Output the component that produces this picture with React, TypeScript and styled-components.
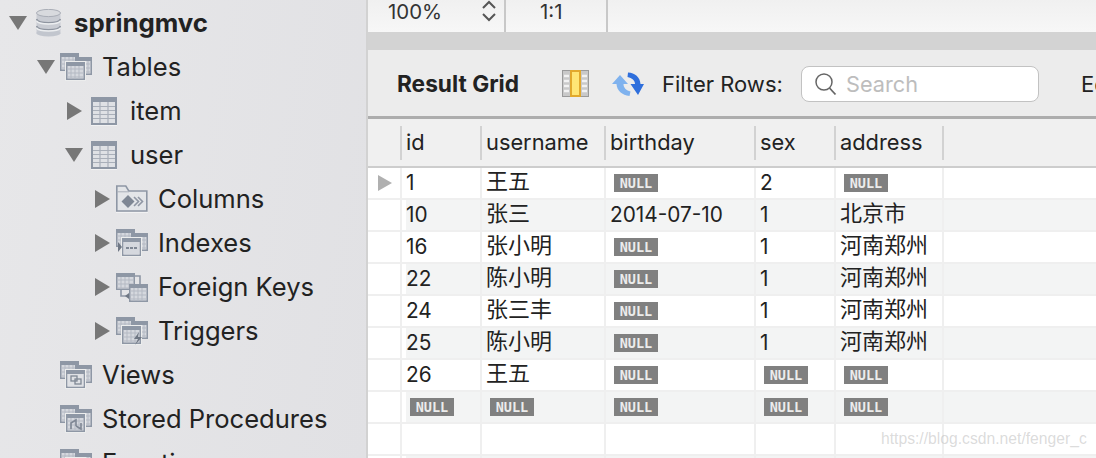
import React from "react";
import styled, { createGlobalStyle } from "styled-components";

const GlobalStyle = createGlobalStyle`
  html, body {
    margin: 0;
    height: 100%;
    overflow: hidden;
    background: #fff;
    font-family: Inter, "Noto Sans CJK SC", "Liberation Sans", sans-serif;
    color: #222;
  }
  #root {
    height: 100%;
  }
`;

const Window = styled.div`
  position: relative;
  display: flex;
  width: 1096px;
  height: 458px;
  overflow: hidden;
`;

const Sidebar = styled.div`
  width: 366px;
  flex: none;
  padding-top: 1px;
  box-sizing: border-box;
  background: linear-gradient(100deg, #e7e7e9, #e1e1e4);
`;

const TreeRow = styled.div<{ $level: number }>`
  display: flex;
  align-items: center;
  height: 44px;
  padding-left: ${(p) => 9 + p.$level * 28}px;
`;

const ArrowSlot = styled.div`
  width: 23px;
  flex: none;
  display: flex;
  align-items: center;
`;

const IconSlot = styled.div`
  width: 32px;
  height: 28px;
  flex: none;
  display: flex;
  justify-content: center;
  margin-right: 10px;
`;

const TreeLabel = styled.span<{ $bold?: boolean }>`
  font-size: ${(p) => (p.$bold ? 25.8 : 25.55)}px;
  font-weight: ${(p) => (p.$bold ? 700 : 400)};
  line-height: 30px;
  white-space: nowrap;
  color: #222;
`;

const Main = styled.div`
  flex: 1;
  min-width: 0;
  display: flex;
  flex-direction: column;
  border-left: 2px solid #d2d2d2;
`;

const TopBar = styled.div`
  height: 32px;
  flex: none;
  display: flex;
  background: linear-gradient(#f0f0f0, #f7f7f7);
`;

const TopCell = styled.div<{ $width: number }>`
  width: ${(p) => p.$width}px;
  box-sizing: border-box;
  border-right: 2px solid #c8c8c8;
  padding-bottom: 10px;
  display: flex;
  align-items: center;
  font-size: 20.4px;
  color: #333;
`;

const ZoomValue = styled.span`
  margin-left: 20px;
  width: 94px;
`;

const RatioValue = styled.span`
  margin-left: 34px;
`;

const Band = styled.div`
  height: 18px;
  flex: none;
  background: #d3d3d3;
`;

const ResultBar = styled.div`
  height: 69px;
  flex: none;
  box-sizing: border-box;
  padding-top: 2px;
  display: flex;
  align-items: center;
  background: #ececec;
  border-bottom: 3px solid #adadad;
  overflow: hidden;
  white-space: nowrap;
`;

const ResultTitle = styled.span`
  margin-left: 29px;
  width: 165px;
  flex: none;
  padding-bottom: 2px;
  font-size: 22.7px;
  font-weight: 700;
`;

const BarButton = styled.div<{ $width: number }>`
  width: ${(p) => p.$width}px;
  flex: none;
  display: flex;
  align-items: center;
`;

const BarLabel = styled.span<{ $width: number }>`
  width: ${(p) => p.$width}px;
  flex: none;
  font-size: 22px;
`;

const SearchBox = styled.div`
  width: 238px;
  height: 36px;
  flex: none;
  box-sizing: border-box;
  display: flex;
  align-items: center;
  gap: 8px;
  padding-left: 12px;
  margin-right: 42px;
  background: #fff;
  border: 1px solid #c2c2c2;
  border-radius: 8px;
  font-size: 21.7px;
  color: #bdbdbd;
`;

const HeaderRow = styled.div`
  height: 47px;
  flex: none;
  display: grid;
  grid-template-columns: 34px 80px 124px 150px 80px 108px 1fr;
  align-items: center;
  background: #f0f0f0;
  border-bottom: 2px solid #cdcdcd;
`;

const HeaderCell = styled.div`
  height: 34px;
  box-sizing: border-box;
  padding: 0 0 2px 4px;
  border-right: 2px solid #d2d2d2;
  display: flex;
  align-items: center;
  font-size: 21.8px;
  color: #222;
`;

const HeaderFill = styled.div`
  height: 34px;
`;

const Rows = styled.div`
  flex: 1;
  display: flex;
  flex-direction: column;
  gap: 2px;
  background: #efefef;
`;

const GridRow = styled.div`
  height: 30px;
  flex: none;
  display: grid;
  grid-template-columns: 32px 78px 122px 148px 78px 106px 1fr;
  grid-template-rows: 30px;
  column-gap: 2px;
`;

const Gutter = styled.div`
  background: #fff;
  display: flex;
  align-items: center;
  padding-left: 10px;
`;

const Cell = styled.div<{ $striped: boolean; $first?: boolean }>`
  background: ${(p) => (p.$striped ? "#f3f4f4" : "#fff")};
  box-shadow: ${(p) => (p.$striped && p.$first ? "inset 4px 0 0 #fff" : "none")};
  padding-left: 4px;
  display: flex;
  align-items: center;
  white-space: nowrap;
  color: #222;
`;

const CellText = styled.span<{ $cjk: boolean }>`
  font-size: ${(p) => (p.$cjk ? 22 : 20.8)}px;
  line-height: 24px;
  padding-bottom: ${(p) => (p.$cjk ? 4 : 1)}px;
`;

const NullBadge = styled.span`
  margin-left: 4px;
  width: 44px;
  height: 18px;
  display: flex;
  align-items: center;
  justify-content: center;
  background: #808080;
  color: #ececec;
  font-family: "DejaVu Sans Mono", monospace;
  font-size: 13.5px;
  font-weight: 700;
`;

const Watermark = styled.span`
  position: absolute;
  left: 881px;
  top: 430px;
  font-family: "Liberation Sans", sans-serif;
  font-size: 15.7px;
  color: rgba(175, 175, 175, 0.45);
  white-space: nowrap;
`;

function DownArrow() {
    return (
        <svg width="18" height="16" viewBox="0 0 18 16">
            <polygon points="0,1 18,1 9,15" fill="#777" />
        </svg>
    );
}

function RightArrow() {
    return (
        <svg width="16" height="18" viewBox="0 0 16 18" style={{ marginLeft: 2 }}>
            <polygon points="0,0 15,9 0,18" fill="#777" />
        </svg>
    );
}

function DatabaseIcon() {
    return (
        <svg width="25" height="28" viewBox="0 0 25 28">
            <rect x="0.5" y="3" width="24" height="22" fill="#c9ccd3" />
            <ellipse cx="12.5" cy="24" rx="12" ry="3.6" fill="#c2c6ce" />
            <ellipse cx="12.5" cy="4" rx="12" ry="3.6" fill="#d8dade" stroke="#a9adb6" />
            <path d="M0.5 10c2 5 22 5 24 0M0.5 17c2 5 22 5 24 0" fill="none" stroke="#8f95a0" strokeWidth="1.6" />
            <path d="M0.5 12c3 4 21 4 24 0M0.5 19c3 4 21 4 24 0" fill="none" stroke="#eceef0" strokeWidth="1.4" />
        </svg>
    );
}

function TableIcon() {
    return (
        <svg width="26" height="29" viewBox="0 0 26 29">
            <rect x="0" y="0" width="26" height="28" fill="#8e97a5" />
            <rect x="2" y="5" width="22" height="21" fill="#dfe1e5" />
            <path
                d="M2 9.5h22M2 13.5h22M2 17.5h22M2 21.5h22M9 5v21M17 5v21"
                stroke="#a9afb9"
                strokeWidth="1.2"
            />
            <rect x="0" y="28" width="26" height="1" fill="#f2f2f3" />
        </svg>
    );
}

function Pane({ x, y, w, h }: { x: number; y: number; w: number; h: number }) {
    const lines = [];
    for (let i = x + 5; i < x + w - 2; i += 4) lines.push(`M${i} ${y + 4}V${y + h - 1}`);
    for (let i = y + 7; i < y + h - 1; i += 4) lines.push(`M${x + 1} ${i}H${x + w - 1}`);
    return (
        <g>
            <rect x={x} y={y} width={w} height={h} fill="#8e97a5" />
            <rect x={x + 1.5} y={y + 4} width={w - 3} height={h - 5.5} fill="#d5d8de" />
            <path d={lines.join("")} stroke="#b4b9c3" strokeWidth="1" />
        </g>
    );
}

type Group = "tables" | "indexes" | "triggers" | "views" | "routines";

function GroupIcon({ kind }: { kind: Group }) {
    return (
        <svg width="32" height="28" viewBox="0 0 32 28">
            <Pane x={0} y={0} w={19} h={18} />
            <Pane x={15} y={4} w={17} h={18} />
            <rect x={5} y={8} width={21} height={20} fill="#eceded" />
            <Pane x={6} y={9} w={19} h={18} />
            {kind === "indexes" && (
                <g>
                    <rect x="7.5" y="13" width="16" height="12.5" fill="#d5d8de" />
                    <path d="M10 19h12" stroke="#7f8794" strokeWidth="2" strokeDasharray="3 1" />
                    <polygon points="2,13 6,18 2,23" fill="#6f7784" />
                </g>
            )}
            {kind === "triggers" && <path d="M23 15l-5 7h4l-3 6 7-8h-4z" fill="#6f7784" />}
            {kind === "views" && (
                <g>
                    <rect x="7.5" y="13" width="16" height="12.5" fill="#dfe1e5" />
                    <rect x="11" y="15" width="6" height="5" fill="none" stroke="#7f8794" strokeWidth="1.3" />
                    <rect x="15" y="18" width="6" height="5" fill="none" stroke="#7f8794" strokeWidth="1.3" />
                </g>
            )}
            {kind === "routines" && (
                <path d="M11 24v-6l5-3v6M16 21l5 3v-6" fill="none" stroke="#7f8794" strokeWidth="1.6" />
            )}
        </svg>
    );
}

function KeysIcon() {
    return (
        <svg width="32" height="30" viewBox="0 0 32 30">
            <Pane x={0} y={0} w={19} h={17} />
            <path d="M19 3h5v8" fill="none" stroke="#8e97a5" strokeWidth="1.6" />
            <path d="M5 17v6h6" fill="none" stroke="#8e97a5" strokeWidth="1.6" />
            <polygon points="13,20 9,23 13,26" fill="#6f7784" />
            <Pane x={13} y={11} w={19} h={18} />
        </svg>
    );
}

function ColumnsIcon() {
    return (
        <svg width="32" height="28" viewBox="0 0 32 28">
            <path d="M0.8 26V1h9l3 5h18v20z" fill="#e3e5e8" stroke="#8e97a5" strokeWidth="1.6" />
            <path d="M1 6.8h12" stroke="#aab0ba" strokeWidth="1" />
            <polygon points="12,10 18.5,16.5 12,23 5.5,16.5" fill="#7f8794" />
            <path d="M18 12l4.5 4.5L18 21M22 12l4.5 4.5L22 21" fill="none" stroke="#8f96a3" strokeWidth="1.6" />
            <rect x="0" y="27" width="32" height="1" fill="#f2f2f3" />
        </svg>
    );
}

function FilmIcon() {
    return (
        <svg width="27" height="28" viewBox="0 0 27 28">
            <rect x="0" y="0" width="27" height="27" fill="#9a9a9a" />
            <rect x="1" y="1" width="25" height="25" fill="#c9c9c9" />
            <path d="M2 6h5M2 11h5M2 16h5M2 21h5M20 6h5M20 11h5M20 16h5M20 21h5" stroke="#f2f2f2" strokeWidth="2.6" />
            <rect x="8" y="0" width="11" height="27" fill="#e2a92c" />
            <rect x="10" y="2" width="7" height="23" fill="#ffe675" />
        </svg>
    );
}

function RefreshIcon() {
    return (
        <svg width="32" height="28" viewBox="0 0 32 28">
            <path d="M0 14L8 5l8 9h-4.5c0 4 3 6.5 7 7.5l-1 4.5C10 25 5 21 4.5 14z" fill="#7fb2ee" />
            <path d="M32 14l-6 11-7.5-11H23c0-3.5-3-6-7.5-7l.5-4.5C23 3 28 7 28.5 14z" fill="#2f6fdc" />
        </svg>
    );
}

function SearchIcon() {
    return (
        <svg width="24" height="24" viewBox="0 0 24 24">
            <circle cx="10" cy="10" r="8" fill="none" stroke="#666" strokeWidth="1.5" />
            <path d="M15.5 16l6 6.5" stroke="#666" strokeWidth="1.8" />
        </svg>
    );
}

function StepperIcon() {
    return (
        <svg width="14" height="22" viewBox="0 0 14 22">
            <path d="M1 8l6-6 6 6M1 14l6 6 6-6" fill="none" stroke="#555" strokeWidth="2" />
        </svg>
    );
}

function RowMarker() {
    return (
        <svg width="14" height="16" viewBox="0 0 14 16">
            <polygon points="0,0 14,8 0,16" fill="#b0b0b0" />
        </svg>
    );
}

type TreeItem = {
    label: string;
    level: number;
    open?: boolean;
    bold?: boolean;
    icon: React.ReactNode;
};

const tree: TreeItem[] = [
    { label: "springmvc", level: 0, open: true, bold: true, icon: <DatabaseIcon /> },
    { label: "Tables", level: 1, open: true, icon: <GroupIcon kind="tables" /> },
    { label: "item", level: 2, open: false, icon: <TableIcon /> },
    { label: "user", level: 2, open: true, icon: <TableIcon /> },
    { label: "Columns", level: 3, open: false, icon: <ColumnsIcon /> },
    { label: "Indexes", level: 3, open: false, icon: <GroupIcon kind="indexes" /> },
    { label: "Foreign Keys", level: 3, open: false, icon: <KeysIcon /> },
    { label: "Triggers", level: 3, open: false, icon: <GroupIcon kind="triggers" /> },
    { label: "Views", level: 1, icon: <GroupIcon kind="views" /> },
    { label: "Stored Procedures", level: 1, icon: <GroupIcon kind="routines" /> },
    { label: "Functions", level: 1, icon: <GroupIcon kind="routines" /> },
];

const columns = ["id", "username", "birthday", "sex", "address"];

const rows: (string | null)[][] = [
    ["1", "王五", null, "2", null],
    ["10", "张三", "2014-07-10", "1", "北京市"],
    ["16", "张小明", null, "1", "河南郑州"],
    ["22", "陈小明", null, "1", "河南郑州"],
    ["24", "张三丰", null, "1", "河南郑州"],
    ["25", "陈小明", null, "1", "河南郑州"],
    ["26", "王五", null, null, null],
    [null, null, null, null, null],
    ["", "", "", "", ""],
    ["", "", "", "", ""],
];

export default function App() {
    return (
        <>
            <GlobalStyle />
            <Window>
                <Sidebar>
                    {tree.map((item) => (
                        <TreeRow key={item.label} $level={item.level}>
                            <ArrowSlot>
                                {item.open === true && <DownArrow />}
                                {item.open === false && <RightArrow />}
                            </ArrowSlot>
                            <IconSlot>{item.icon}</IconSlot>
                            <TreeLabel $bold={item.bold}>{item.label}</TreeLabel>
                        </TreeRow>
                    ))}
                </Sidebar>
                <Main>
                    <TopBar>
                        <TopCell $width={138}>
                            <ZoomValue>100%</ZoomValue>
                            <StepperIcon />
                        </TopCell>
                        <TopCell $width={102}>
                            <RatioValue>1:1</RatioValue>
                        </TopCell>
                    </TopBar>
                    <Band />
                    <ResultBar>
                        <ResultTitle>Result Grid</ResultTitle>
                        <BarButton $width={50}>
                            <FilmIcon />
                        </BarButton>
                        <BarButton $width={50}>
                            <RefreshIcon />
                        </BarButton>
                        <BarLabel $width={139}>Filter Rows:</BarLabel>
                        <SearchBox>
                            <SearchIcon />
                            Search
                        </SearchBox>
                        <BarLabel $width={60}>Edit:</BarLabel>
                    </ResultBar>
                    <HeaderRow>
                        <HeaderCell />
                        {columns.map((name) => (
                            <HeaderCell key={name}>{name}</HeaderCell>
                        ))}
                        <HeaderFill />
                    </HeaderRow>
                    <Rows>
                        {rows.map((row, index) => (
                            <GridRow key={index}>
                                <Gutter>{index === 0 && <RowMarker />}</Gutter>
                                {row.map((value, col) => (
                                    <Cell key={col} $striped={index % 2 === 1} $first={col === 0}>
                                        {value === null ? (
                                            <NullBadge>NULL</NullBadge>
                                        ) : (
                                            <CellText $cjk={/[^\x00-\x7f]/.test(value)}>{value}</CellText>
                                        )}
                                    </Cell>
                                ))}
                                <Cell $striped={index % 2 === 1} />
                            </GridRow>
                        ))}
                    </Rows>
                </Main>
                <Watermark>https://blog.csdn.net/fenger_c</Watermark>
            </Window>
        </>
    );
}
